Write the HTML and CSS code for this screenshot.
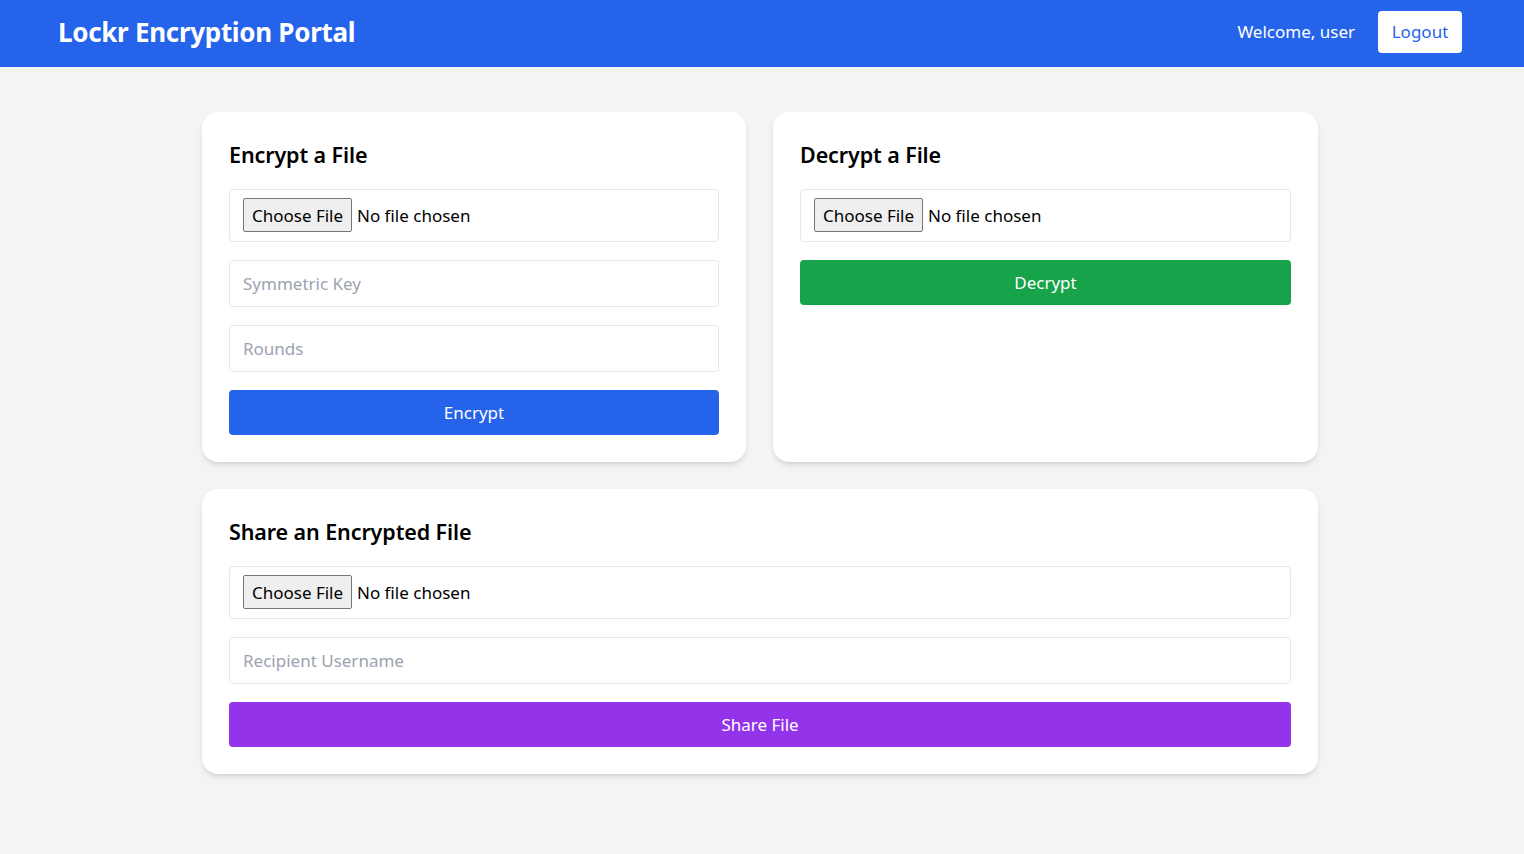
FILE: index.html
```html
<!DOCTYPE html>
<html lang="en">
<head>
<meta charset="utf-8">
<title>Lockr Encryption Portal</title>
<link rel="stylesheet" href="styles.css">
</head>
<body>
<header class="topbar">
  <h1 class="brand">Lockr Encryption Portal</h1>
  <div class="user-area">
    <span class="welcome">Welcome, user</span>
    <button class="logout">Logout</button>
  </div>
</header>
<main class="container">
  <div class="row">
    <section class="card">
      <h2 class="card-title">Encrypt a File</h2>
      <div class="stack">
        <div class="file-box"><span class="file-btn">Choose File</span><span class="file-label">No file chosen</span></div>
        <input class="field" type="text" placeholder="Symmetric Key">
        <input class="field" type="text" placeholder="Rounds">
        <button class="action blue">Encrypt</button>
      </div>
    </section>
    <section class="card">
      <h2 class="card-title">Decrypt a File</h2>
      <div class="stack">
        <div class="file-box"><span class="file-btn">Choose File</span><span class="file-label">No file chosen</span></div>
        <button class="action green">Decrypt</button>
      </div>
    </section>
  </div>
  <section class="card">
    <h2 class="card-title">Share an Encrypted File</h2>
    <div class="stack">
      <div class="file-box"><span class="file-btn">Choose File</span><span class="file-label">No file chosen</span></div>
      <input class="field" type="text" placeholder="Recipient Username">
      <button class="action purple">Share File</button>
    </div>
  </section>
</main>
</body>
</html>
```
FILE: styles.css
```css
* { box-sizing: border-box; }
html, body { margin: 0; padding: 0; }
body {
  background: #f3f4f6;
  font-family: "Noto Sans", "Open Sans", sans-serif;
  color: #000;
  min-height: 854px;
}
.topbar {
  height: 67px;
  background: #2563eb;
  display: flex;
  align-items: center;
  justify-content: space-between;
  padding: 0 62px 4px 58px;
}
.brand {
  margin: 0;
  color: #fff;
  font-size: 26px;
  font-weight: 700;
  letter-spacing: -0.3px;
  line-height: 36px;
  padding-top: 1px;
}
.user-area {
  display: flex;
  align-items: center;
  gap: 23px;
}
.welcome {
  color: #fff;
  font-size: 17px;
}
.logout {
  width: 84px;
  height: 42px;
  background: #fff;
  color: #2563eb;
  border: none;
  border-radius: 4px;
  font-family: inherit;
  font-size: 17px;
  padding: 0;
}
.container {
  width: 1116px;
  margin: 45px auto 0;
  position: relative;
  left: -2px;
  display: flex;
  flex-direction: column;
  gap: 27px;
}
.row {
  display: grid;
  grid-template-columns: 544px 545px;
  gap: 27px;
}
.card {
  background: #fff;
  border-radius: 16px;
  padding: 27px;
  box-shadow: 0 4px 6px -1px rgba(0,0,0,0.1), 0 2px 4px -2px rgba(0,0,0,0.1);
}
.card-title {
  margin: 0 0 18px;
  font-size: 21.5px;
  font-weight: 600;
  line-height: 32px;
  letter-spacing: -0.1px;
}
.stack {
  display: flex;
  flex-direction: column;
  gap: 18px;
}
.file-box {
  height: 53px;
  border: 1px solid #e5e7eb;
  border-radius: 4px;
  padding: 8px 13px 9px;
  display: flex;
  align-items: center;
  font-size: 17px;
}
.file-btn {
  height: 34px;
  width: 109px;
  display: flex;
  align-items: center;
  justify-content: center;
  background: #efefef;
  border: 1px solid #767676;
  border-radius: 2px;
  color: #000;
  margin-right: 5px;
}
.file-label { color: #000; }
.field {
  height: 47px;
  border: 1px solid #e5e7eb;
  border-radius: 4px;
  padding: 0 13px;
  font-family: inherit;
  font-size: 17px;
  color: #111;
  background: #fff;
  outline: none;
}
.field::placeholder { color: #9ca3af; }
.action {
  height: 45px;
  border: none;
  border-radius: 4px;
  color: #fff;
  font-family: inherit;
  font-size: 17px;
  padding: 0;
}
.blue { background: #2563eb; }
.green { background: #16a34a; }
.purple { background: #9333ea; }
```
